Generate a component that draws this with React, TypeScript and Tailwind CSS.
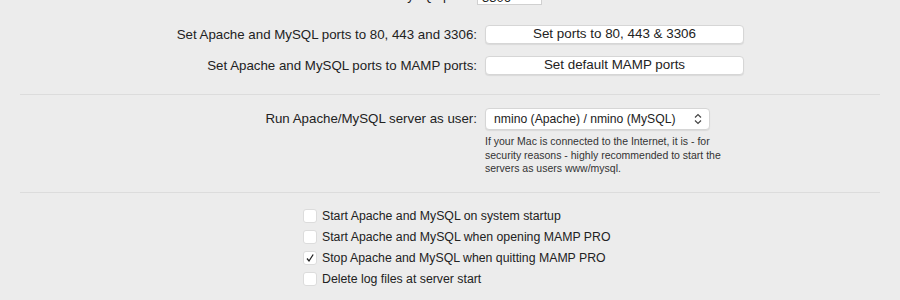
import React from "react";

const font = { fontFamily: '"Liberation Sans", Arial, sans-serif' };

function Btn({ children }: { children: React.ReactNode }) {
  return (
    <div className="w-[259px] h-[19px] bg-white rounded-[4px] border border-[#d6d6d6] shadow-[0_1px_1px_rgba(0,0,0,0.08)] flex items-center justify-center text-[13.4px] text-[#222]">
      {children}
    </div>
  );
}

function Check({ checked, label }: { checked?: boolean; label: string }) {
  return (
    <div className="flex items-center h-[21px]">
      <div className="w-[14px] h-[14px] bg-white rounded-[3px] border border-[#dcdcdc] flex items-center justify-center">
        {checked && (
          <svg width="10" height="10" viewBox="0 0 10 10">
            <path d="M2 5.5 L4 8 L8.2 1.5" fill="none" stroke="#222" strokeWidth="1.3" />
          </svg>
        )}
      </div>
      <span className="ml-[5px] text-[12.3px] text-[#222]">{label}</span>
    </div>
  );
}

export default function App() {
  return (
    <div className="w-[900px] h-[300px] bg-[#ececec] overflow-hidden" style={font}>
      <div className="-mt-[13px] px-[20px]">
        {/* top row cut */}
        <div className="flex items-center h-[18px]">
          <div className="w-[457px] text-right text-[13px] text-[#222] pr-[8px]">MySQL port:</div>
          <div className="w-[65px] h-[18px] bg-white border border-[#d0d0d0] text-[13px] px-[4px] text-[#222]">3306</div>
          <div className="ml-[10px] text-[10.5px] text-[#444]">Valid numbers are from 1024 to 65535.</div>
        </div>
        <div className="flex items-center h-[19px] mt-[20px]">
          <div className="w-[465px] text-right text-[13.3px] text-[#222] pr-[8px]">Set Apache and MySQL ports to 80, 443 and 3306:</div>
          <Btn>Set ports to 80, 443 &amp; 3306</Btn>
        </div>
        <div className="flex items-center h-[19px] mt-[12px]">
          <div className="w-[465px] text-right text-[13.3px] text-[#222] pr-[8px]">Set Apache and MySQL ports to MAMP ports:</div>
          <Btn>Set default MAMP ports</Btn>
        </div>
        <div className="h-px bg-[#dcdcdc] mt-[19px]" />
        <div className="flex items-center h-[22px] mt-[13px]">
          <div className="w-[465px] text-right text-[13.3px] text-[#222] pr-[8px]">Run Apache/MySQL server as user:</div>
          <div className="w-[225px] h-[22px] bg-white rounded-[4px] border border-[#d6d6d6] shadow-[0_1px_1px_rgba(0,0,0,0.08)] flex items-center justify-between pl-[8px] pr-[7px] text-[12.2px] text-[#222]">
            <span>nmino (Apache) / nmino (MySQL)</span>
            <svg width="8" height="12" viewBox="0 0 8 12">
              <path d="M1 4.5 L4 1.5 L7 4.5 M1 7.5 L4 10.5 L7 7.5" fill="none" stroke="#444" strokeWidth="1.2" />
            </svg>
          </div>
        </div>
        <div className="ml-[465px] mt-[5px] text-[10.5px] leading-[13.5px] text-[#333] w-[245px]">
          If your Mac is connected to the Internet, it is - for security reasons - highly recommended to start the servers as users www/mysql.
        </div>
        <div className="h-px bg-[#dcdcdc] mt-[16px]" />
        <div className="ml-[283px] mt-[13px] flex flex-col">
          <Check label="Start Apache and MySQL on system startup" />
          <Check label="Start Apache and MySQL when opening MAMP PRO" />
          <Check checked label="Stop Apache and MySQL when quitting MAMP PRO" />
          <Check label="Delete log files at server start" />
        </div>
      </div>
    </div>
  );
}
